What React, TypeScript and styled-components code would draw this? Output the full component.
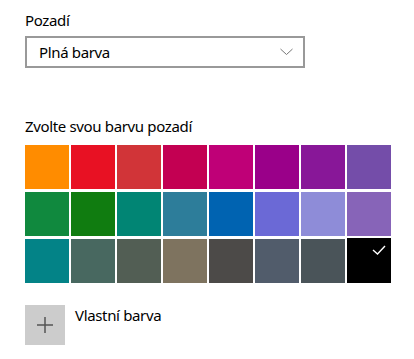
import React from "react";
import styled, { createGlobalStyle } from "styled-components";

const GlobalStyle = createGlobalStyle`
  html, body {
    margin: 0;
    padding: 0;
    background: #ffffff;
  }
  body {
    font-family: "Noto Sans", "Open Sans", sans-serif;
    color: #000000;
  }
`;

const Page = styled.div`
  display: flex;
  flex-direction: column;
  align-items: flex-start;
  padding: 10px 0 0 25px;
  width: 414px;
  height: 359px;
  box-sizing: border-box;
  background: #ffffff;
`;

const Label = styled.div<{ $top?: number }>`
  font-size: 15px;
  line-height: 20px;
  letter-spacing: -0.35px;
  color: #000000;
  margin-top: ${(p) => p.$top ?? 0}px;
  white-space: nowrap;
`;

const Select = styled.div`
  margin-top: 6px;
  width: 280px;
  height: 32px;
  box-sizing: border-box;
  border: 2px solid #999999;
  background: #ffffff;
  display: flex;
  align-items: center;
  justify-content: space-between;
  padding: 0 10px 0 12px;
  font-size: 15px;
  line-height: 20px;
  letter-spacing: -0.35px;
`;

const Chevron = styled.svg`
  width: 13px;
  height: 8px;
  display: block;
`;

const Grid = styled.div`
  margin-top: 9px;
  display: grid;
  grid-template-columns: repeat(8, 44px);
  grid-auto-rows: 44px;
  column-gap: 2px;
  row-gap: 3px;
`;

const Swatch = styled.div<{ $color: string; $selected?: boolean }>`
  position: relative;
  background: ${(p) => p.$color};
  ${(p) => (p.$selected ? "margin-top: -1px;" : "")}
`;

const Check = styled.svg`
  position: absolute;
  left: 0;
  top: 1px;
  width: 44px;
  height: 44px;
`;

const CustomRow = styled.div`
  margin-top: 22px;
  display: flex;
  align-items: flex-start;
  gap: 10px;
`;

const PlusTile = styled.div`
  width: 40px;
  height: 40px;
  background: #cccccc;
  display: flex;
  align-items: center;
  justify-content: center;
`;

const PlusIcon = styled.svg`
  width: 18px;
  height: 18px;
  display: block;
`;

const colors: string[] = [
  "#FF8C00", "#E81123", "#D13438", "#C30052", "#BF0077", "#9A0089", "#881798", "#744DA9",
  "#10893E", "#107C10", "#018574", "#2D7D9A", "#0063B1", "#6B69D6", "#8E8CD8", "#8764B8",
  "#038387", "#486860", "#525E54", "#7E735F", "#4C4A48", "#515C6B", "#4A5459", "#000000",
];

export default function App() {
  return (
    <>
      <GlobalStyle />
      <Page>
        <Label>Pozadí</Label>
        <Select>
          <span>Plná barva</span>
          <Chevron viewBox="0 0 13 8">
            <polyline points="0.5,1 6.5,6.5 12.5,1" fill="none" stroke="#777777" strokeWidth="1" />
          </Chevron>
        </Select>
        <Label $top={48}>Zvolte svou barvu pozadí</Label>
        <Grid>
          {colors.map((c, i) => {
            const selected = i === colors.length - 1;
            return (
              <Swatch key={i} $color={c} $selected={selected}>
                {selected && (
                  <Check viewBox="0 0 44 44">
                    <polyline
                      points="26,11 30.5,15 38,7"
                      fill="none"
                      stroke="#ffffff"
                      strokeWidth="1.4"
                    />
                  </Check>
                )}
              </Swatch>
            );
          })}
        </Grid>
        <CustomRow>
          <PlusTile>
            <PlusIcon viewBox="0 0 18 18">
              <line x1="1" y1="9" x2="17" y2="9" stroke="#555555" strokeWidth="1.5" />
              <line x1="9" y1="1" x2="9" y2="17" stroke="#555555" strokeWidth="1.5" />
            </PlusIcon>
          </PlusTile>
          <Label>Vlastní barva</Label>
        </CustomRow>
      </Page>
    </>
  );
}
